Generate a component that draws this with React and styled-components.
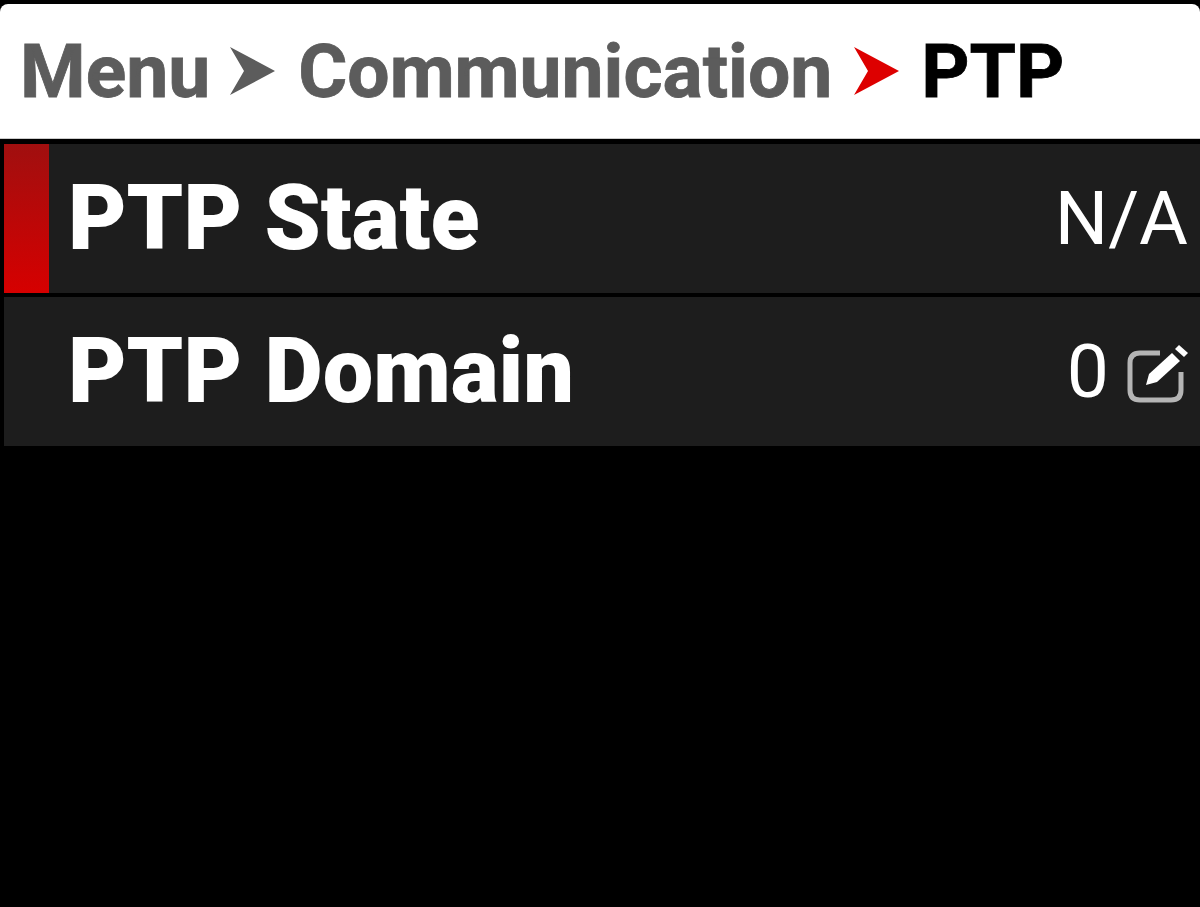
import React from "react";
import styled, { createGlobalStyle } from "styled-components";

const GlobalStyle = createGlobalStyle`
  html, body {
    margin: 0;
    height: 100%;
    background: #000;
  }
  body {
    font-family: Roboto, "Liberation Sans", sans-serif;
    overflow: hidden;
  }
`;

const Screen = styled.div`
  width: 1200px;
  height: 907px;
  background: #000;
  padding-top: 4px;
  box-sizing: border-box;
`;

const Breadcrumb = styled.div`
  height: 135px;
  background: #fff;
  border-radius: 8px 8px 0 0;
  border-bottom: 1px solid #ccc;
  box-sizing: border-box;
  display: flex;
  align-items: center;
  padding: 0 0 0 20px;
  font-size: 75px;
  font-weight: 700;
  line-height: 1;
`;

const Crumb = styled.span`
  color: ${(p) => (p.$current ? "#000" : "#5c5c5c")};
  -webkit-text-stroke: 0.8px currentColor;
`;

const Arrow = styled.svg`
  width: 48px;
  height: 50px;
  margin: 0 ${(p) => p.$gap}px 0 ${(p) => p.$lead}px;
  fill: ${(p) => (p.$active ? "#dd0000" : "#5c5c5c")};
  flex: none;
`;

const List = styled.div`
  display: flex;
  flex-direction: column;
  gap: 4px;
  padding: 5px 0 0 4px;
`;

const Row = styled.div`
  height: 149px;
  background: #1d1d1d;
  display: flex;
  align-items: center;
  position: relative;
  padding: 0 12px 0 64px;
`;

const Marker = styled.div`
  position: absolute;
  left: 0;
  top: 0;
  bottom: 0;
  width: 45px;
  background: linear-gradient(to bottom, #a00f0f, #d60000);
`;

const Label = styled.span`
  color: #fff;
  font-size: 90px;
  font-weight: 900;
  line-height: 1;
  flex: 1;
`;

const Value = styled.span`
  color: #fff;
  font-size: 75px;
  font-weight: 400;
  line-height: 1;
`;

const EditIcon = styled.svg`
  width: 62px;
  height: 62px;
  margin: 6px 0 0 17px;
  flex: none;
`;

function Chevron({ active, lead, gap }) {
  return (
    <Arrow viewBox="0 0 48 50" $active={active} $lead={lead} $gap={gap}>
      <path d="M2 1 L47 25 L2 49 L16 25 Z" />
    </Arrow>
  );
}

function App() {
  return (
    <>
      <GlobalStyle />
      <Screen>
        <Breadcrumb>
          <Crumb>Menu</Crumb>
          <Chevron lead={18} gap={22} />
          <Crumb>Communication</Crumb>
          <Chevron active lead={20} gap={21} />
          <Crumb $current>PTP</Crumb>
        </Breadcrumb>
        <List>
          <Row>
            <Marker />
            <Label>PTP State</Label>
            <Value>N/A</Value>
          </Row>
          <Row>
            <Label>PTP Domain</Label>
            <Value>0</Value>
            <EditIcon viewBox="0 0 62 62">
              <path
                d="M34 9 H14 Q4 9 4 19 V46 Q4 56 14 56 H45 Q55 56 55 46 V28"
                fill="none"
                stroke="#b5b5b5"
                strokeWidth="5"
              />
              <path d="M20 41 L23 30 L46 9 L54 17 L31 38 Z" fill="#fff" />
              <path d="M49 5 L53 1 L62 9 L58 13 Z" fill="#fff" />
            </EditIcon>
          </Row>
        </List>
      </Screen>
    </>
  );
}

export default App;
